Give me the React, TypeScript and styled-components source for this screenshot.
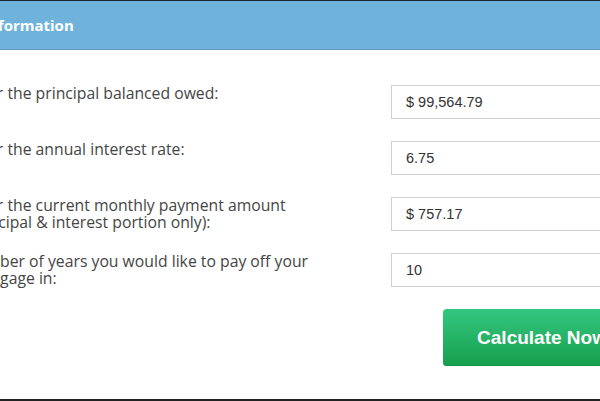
import styled, { createGlobalStyle } from 'styled-components';

const GlobalStyle = createGlobalStyle`
	html, body {
		margin: 0;
		padding: 0;
		background: #fff;
		overflow: hidden;
	}
`;

const Page = styled.div`
	width: 600px;
	height: 401px;
	box-sizing: border-box;
	overflow: hidden;
	border-top: 1px solid #1b2433;
	border-bottom: 2px solid #222;
`;

const Panel = styled.div`
	width: 720px;
	margin-left: -50px;
`;

const PanelHeader = styled.div`
	height: 49px;
	display: flex;
	align-items: center;
	padding-left: 33px;
	background: #6fb3dd;
	border-bottom: 1px solid #5d9dc3;
	color: #fff;
	font-family: 'Open Sans', sans-serif;
	font-weight: 700;
	font-size: 15px;
	box-sizing: border-box;
`;

const Form = styled.div`
	display: flex;
	flex-direction: column;
	gap: 22px;
	padding: 35px 0 0 14px;
`;

const Row = styled.div`
	display: grid;
	grid-template-columns: 345px 250px;
	column-gap: 82px;
	align-items: start;
`;

const Label = styled.label`
	display: block;
	box-sizing: border-box;
	height: 34px;
	font-family: 'Open Sans', sans-serif;
	font-size: 15.75px;
	line-height: 17px;
	color: #454545;
`;

const Input = styled.input`
	box-sizing: border-box;
	width: 100%;
	height: 34px;
	padding: 0 14px;
	border: 1px solid #cfcfcf;
	border-radius: 0;
	font-family: 'Liberation Sans', Arial, sans-serif;
	font-size: 14.5px;
	color: #333;
	outline: none;
`;

const CalcButton = styled.button`
	grid-column: 2;
	justify-self: end;
	width: 198px;
	height: 57px;
	border: none;
	border-radius: 4px;
	background: linear-gradient(#33c680, #17a04d);
	box-shadow: inset 0 -1px 0 #12913f;
	color: #fff;
	font-family: 'Liberation Sans', Arial, sans-serif;
	font-weight: 700;
	font-size: 19px;
	cursor: pointer;
`;

const fields = [
	{ label: 'Enter the principal balanced owed:', value: '$ 99,564.79' },
	{ label: 'Enter the annual interest rate:', value: '6.75' },
	{
		label:
			'Enter the current monthly payment amount (Principal & interest portion only):',
		value: '$ 757.17',
	},
	{
		label: 'Number of years you would like to pay off your mortgage in:',
		value: '10',
	},
];

const App = () => {
	return (
		<>
			<GlobalStyle />
			<Page>
				<Panel>
					<PanelHeader>Information</PanelHeader>
					<Form>
						{fields.map((f) => (
							<Row key={f.label}>
								<Label>{f.label}</Label>
								<Input defaultValue={f.value} />
							</Row>
						))}
						<Row>
							<CalcButton>Calculate Now</CalcButton>
						</Row>
					</Form>
				</Panel>
			</Page>
		</>
	);
};

export default App;
